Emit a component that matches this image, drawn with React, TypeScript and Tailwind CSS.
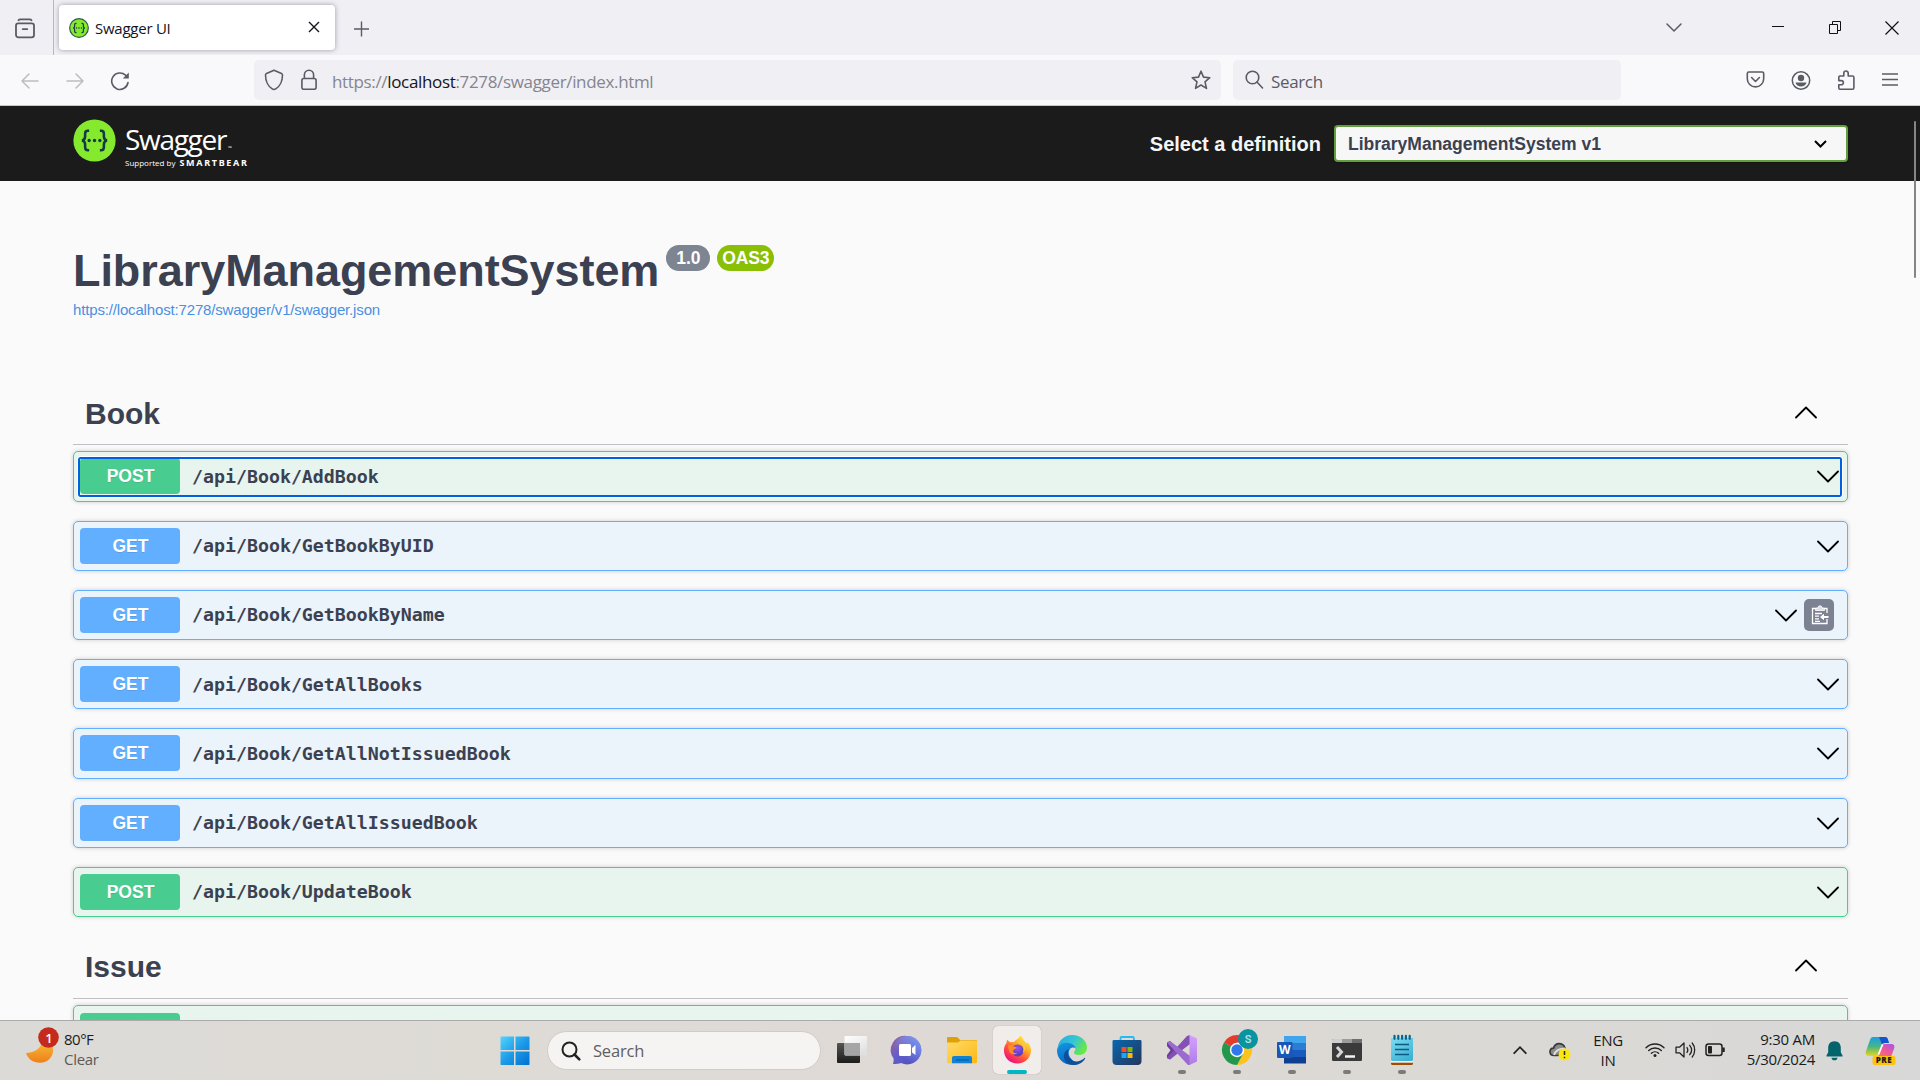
import React from "react";

type Method = "POST" | "GET";
type Endpoint = { method: Method; path: string; focused?: boolean; copy?: boolean };

const endpoints: Endpoint[] = [
  { method: "POST", path: "/api/Book/AddBook", focused: true },
  { method: "GET", path: "/api/Book/GetBookByUID" },
  { method: "GET", path: "/api/Book/GetBookByName", copy: true },
  { method: "GET", path: "/api/Book/GetAllBooks" },
  { method: "GET", path: "/api/Book/GetAllNotIssuedBook" },
  { method: "GET", path: "/api/Book/GetAllIssuedBook" },
  { method: "POST", path: "/api/Book/UpdateBook" },
];

function SwaggerMark({ size, ring = false }: { size: number; ring?: boolean }) {
  return (
    <svg width={size} height={size} viewBox="0 0 44 44" className="shrink-0">
      <circle cx="22" cy="22" r={ring ? 20.5 : 21.6} fill="#85ea2d" stroke={ring ? "#2b5a4a" : "none"} strokeWidth="2.6" />
      <g fill="none" stroke="#173647" strokeWidth="2.6">
        <path d="M16.5 12h-1.3c-2 0-2.8 1-2.8 3v3c0 2.3-.9 3.6-3.2 4 2.3.4 3.2 1.700 3.200 4v3c0 2 .8 3 2.800 3h1.300" />
        <path d="M27.500 12h1.300c2 0 2.800 1 2.800 3v3c0 2.300.9 3.600 3.200 4-2.300.4-3.200 1.700-3.200 4v3c0 2-.8 3-2.800 3h-1.300" />
      </g>
      <g fill="#173647">
        <circle cx="16.500" cy="22" r="1.700" />
        <circle cx="22" cy="22" r="1.700" />
        <circle cx="27.500" cy="22" r="1.700" />
      </g>
    </svg>
  );
}

function TabStrip() {
  return (
    <div className="flex h-[55px] bg-[#f0eff4]">
      <div className="flex w-[54px] border-r border-[#b9b8c0] pl-[15px] pt-[18px]">
        <svg width="20" height="21" viewBox="0 0 20 21" fill="none" stroke="#5b5b66" strokeWidth="1.800" strokeLinecap="round">
          <path d="M3.500 2.300C4 1.500 4.500 1.300 5.200 1.300h9.600c.7 0 1.200.2 1.700 1" />
          <rect x="1" y="5.300" width="18" height="14" rx="2.300" />
          <path d="M7.800 11.200h4.400" />
        </svg>
      </div>
      <div className="ml-[5px] mt-[5px] flex h-[45px] w-[276px] items-center rounded bg-white shadow-[0_0_5px_rgba(100,100,110,0.6)]">
        <div className="ml-[10px]"><SwaggerMark size={20} ring /></div>
        <span className="ml-[6px] mt-[1px] text-[15px] tracking-[-0.25px] text-[#15141a]">Swagger UI</span>
        <svg width="12" height="12" viewBox="0 0 12 12" className="ml-auto mr-[15px] -mt-px" fill="none" stroke="#15141a" strokeWidth="1.400">
          <path d="M1 1l10 10M11 1L1 11" />
        </svg>
      </div>
      <svg width="16" height="16" viewBox="0 0 16 16" className="ml-[18px] mt-[21px]" fill="none" stroke="#5b5b66" strokeWidth="1.400">
        <path d="M8.500 .5v15M1 8h15" />
      </svg>
      <div className="ml-auto flex">
        <svg width="18" height="12" viewBox="0 0 18 12" className="mt-[22px]" fill="none" stroke="#5b5b66" strokeWidth="1.500" strokeLinecap="round">
          <path d="M2 2l7 7 7-7" />
        </svg>
        <svg width="12" height="13" viewBox="0 0 12 13" className="ml-[89px] mt-[20px]" stroke="#111" strokeWidth="1"><path d="M0 6.500h12" /></svg>
        <svg width="13" height="13" viewBox="0 0 13 13" className="ml-[45px] mt-[21px]" fill="none" stroke="#111">
          <path d="M.5 3.500h8v9h-8zM3.500 3.500v-3h8v9h-3" />
        </svg>
        <svg width="14" height="14" viewBox="0 0 14 14" className="ml-[43px] mr-[21px] mt-[21px]" stroke="#111" strokeWidth="1.200"><path d="M.5.500l13 13M13.500.500l-13 13" /></svg>
      </div>
    </div>
  );
}

function NavBar() {
  return (
    <div className="flex h-[51px] border-b border-[#c8c8cc] bg-[#f9f9fb] pt-[5px]">
      <svg width="18" height="16" viewBox="0 0 18 16" className="ml-[21px] mt-[13px]" fill="none" stroke="#bcbcc2" strokeWidth="1.500" strokeLinecap="round" strokeLinejoin="round"><path d="M17 8H1M8 1L1 8l7 7" /></svg>
      <svg width="18" height="16" viewBox="0 0 18 16" className="ml-[27px] mt-[13px]" fill="none" stroke="#bcbcc2" strokeWidth="1.500" strokeLinecap="round" strokeLinejoin="round"><path d="M1 8h16M10 1l7 7-7 7" /></svg>
      <svg width="20" height="20" viewBox="0 0 20 20" className="ml-[26px] mt-[11px]" fill="none" stroke="#5b5b66" strokeWidth="1.600" strokeLinecap="round">
        <path d="M18 11.500a8.200 8.200 0 1 1-2.500-7.300" />
        <path d="M18.800 1.500v6h-6z" fill="#5b5b66" stroke="none" />
      </svg>
      <div className="ml-[124px] flex h-10 w-[967px] rounded-[5px] bg-[#f0eff4]">
        <svg width="20" height="22" viewBox="0 0 20 22" className="ml-[10px] mt-[9px]" fill="none" stroke="#5b5b66" strokeWidth="1.600" strokeLinejoin="round">
          <path d="M10 1.200l7.500 3.200c.7.300 1 .8 1 1.500 0 6.300-3 11.800-6.700 14-.6.400-1.200.6-1.800.6s-1.200-.2-1.800-.6C4.500 17.700 1.500 12.200 1.500 5.900c0-.7.300-1.200 1-1.500z" />
        </svg>
        <svg width="16" height="22" viewBox="0 0 16 22" className="ml-[17px] mt-[9px]" fill="none" stroke="#5b5b66" strokeWidth="1.600">
          <rect x=".9" y="9.500" width="14.200" height="10.700" rx="2" />
          <path d="M3.400 9.500V5.800a4.600 4.600 0 0 1 9.200 0v3.700" />
        </svg>
        <span className="ml-[15px] mt-[10px] text-[17px] leading-6 tracking-[-0.340px] text-[#85858d]">https://<span className="text-[#15141a]">localhost</span>:7278/swagger/index.html</span>
        <svg width="20" height="20" viewBox="0 0 20 20" className="ml-auto mr-[10px] mt-[10px]" fill="none" stroke="#5b5b66" strokeWidth="1.600" strokeLinejoin="round">
          <path d="M10 1.200l2.500 5.900 6.300.6-4.800 4.200 1.500 6.500-5.500-3.400-5.500 3.400L6 11.900 1.200 7.700l6.300-.6z" />
        </svg>
      </div>
      <div className="ml-3 flex h-10 w-[388px] rounded-[5px] bg-[#f0eff4]">
        <svg width="19" height="20" viewBox="0 0 19 20" className="ml-[12px] mt-[10px]" fill="none" stroke="#5b5b66" strokeWidth="1.600" strokeLinecap="round"><circle cx="7.500" cy="7.500" r="6.300" /><path d="M12 12l5.500 6" /></svg>
        <span className="ml-[7px] mt-[10px] text-[17px] leading-6 tracking-[-0.350px] text-[#5b5b66]">Search</span>
      </div>
      <div className="ml-auto mr-[22px] flex pt-[10px]">
        <svg width="19" height="20" viewBox="0 0 19 20" fill="none" stroke="#5b5b66" strokeWidth="1.600" strokeLinecap="round" strokeLinejoin="round"><path d="M2.800 2h13.400c.9 0 1.500.6 1.500 1.500v5.200a8.200 8.200 0 0 1-16.400 0V3.500c0-.9.600-1.500 1.500-1.500zM5.600 7.500l3.900 4 3.900-4" /></svg>
        <svg width="20" height="20" viewBox="0 0 20 20" className="ml-[26px]" fill="#5b5b66"><circle cx="10" cy="10.500" r="8.700" fill="none" stroke="#5b5b66" strokeWidth="1.500" /><circle cx="10" cy="8" r="3.200" /><path d="M4.500 12.500h11c-.6 2.400-3 4-5.500 4s-4.900-1.600-5.500-4z" /></svg>
        <svg width="19" height="21" viewBox="0 0 19 21" className="ml-[26px]" fill="none" stroke="#5b5b66" strokeWidth="1.600" strokeLinejoin="round"><path d="M3 19.200c-.8 0-1.200-.4-1.200-1.200v-3.200h2.500a1.900 1.900 0 0 0 0-4.200H1.800V7.200c0-.8.400-1.200 1.200-1.200h3.800V3.200a2.100 2.100 0 0 1 4.400 0V6h4.300c.9 0 1.400.5 1.400 1.400v10.400c0 .9-.5 1.400-1.400 1.400z" /></svg>
        <svg width="16" height="20" viewBox="0 0 16 20" className="ml-[26px]" stroke="#5b5b66" strokeWidth="1.500"><path d="M0 4h16M0 9.500h16M0 15h16" /></svg>
      </div>
    </div>
  );
}

function Chevron({ up = false, className = "" }: { up?: boolean; className?: string }) {
  return (
    <svg width="22" height="13" viewBox="0 0 22 13" className={"shrink-0 " + className} fill="none" stroke="#000" strokeWidth="1.800" strokeLinecap="round" strokeLinejoin="round">
      <path d={up ? "M1 11.500L11 1.500l10 10" : "M1 1.500l10 10 10-10"} />
    </svg>
  );
}

function SwaggerHeader() {
  return (
    <div className="flex h-[75px] bg-[#1b1b1b] pl-[73px] pr-[72px] font-['Liberation_Sans']">
      <div className="mt-[13px]"><SwaggerMark size={43} /></div>
      <div className="ml-[9px] mt-[18px] font-['Open_Sans'] text-white">
        <div className="flex h-[31px] items-end text-[28px] leading-[31px] tracking-[-1.300px]">
          Swagger<span className="ml-[2px] pb-[4px] text-[5px] leading-none tracking-normal">™</span>
        </div>
        <div className="flex items-baseline whitespace-nowrap pt-[3px] text-[8px] leading-[10px]">
          Supported by<span className="ml-[4px] font-['Noto_Sans'] text-[9px] font-bold tracking-[1.700px]">SMARTBEAR</span>
        </div>
      </div>
      <div className="ml-auto flex pt-[19px]">
        <span className="mr-[13px] text-[20px] font-bold leading-[38px] text-[#f5f5f5]">Select a definition</span>
        <div className="flex h-[37px] w-[514px] items-center justify-between rounded border-2 border-[#62a03f] bg-[#f7f7f7] pl-[12px] pr-[19px] text-[17.500px] font-bold text-[#3b4151] shadow-[0_1px_2px_rgba(0,0,0,0.25)]">
          <span className="mt-px">LibraryManagementSystem v1</span>
          <svg width="13" height="8" viewBox="0 0 13 8" fill="none" stroke="#000" strokeWidth="2"><path d="M1 1l5.500 5.500L12 1" /></svg>
        </div>
      </div>
    </div>
  );
}

function TagHeader({ name }: { name: string }) {
  return (
    <div className="flex h-[62px] items-center justify-between border-b border-[#bfc0c5] pl-[12px] pr-[31px]">
      <h2 className="text-[30px] font-bold leading-none">{name}</h2>
      <Chevron up className="-mt-[3px]" />
    </div>
  );
}

function OperationRow({ op }: { op: Endpoint }) {
  const post = op.method === "POST";
  return (
    <div
      className={
        "relative mb-[19px] flex items-center rounded-[5px] border pl-[6px] pr-[8px] shadow-[0_0_4px_rgba(0,0,0,0.19)] " +
        (post ? "border-[#49cc90] bg-[#e7f5ee] " : "border-[#61affe] bg-[#ebf3fb] ") +
        (op.focused ? "h-[50.800px]" : "h-[50.200px]")
      }
    >
      <span
        className={
          "w-[100px] rounded pl-px text-center text-[17.500px] font-bold leading-9 text-white [text-shadow:0_1px_0_rgba(0,0,0,0.1)] " +
          (post ? "bg-[#49cc90]" : "bg-[#61affe]")
        }
      >
        {op.method}
      </span>
      <span className="ml-[12px] mt-px font-['DejaVu_Sans_Mono'] text-[18.250px] font-bold leading-none text-[#3b4151]">{op.path}</span>
      <Chevron className={op.copy ? "ml-auto mr-[7px] mt-px" : "ml-auto mt-px"} />
      {op.copy && (
        <span className="mr-[5px] flex h-8 w-[30px] items-center justify-center rounded-[5px] bg-[#7d8293]">
          <svg width="18" height="20" viewBox="0 0 18 20" className="ml-[2px]" fill="none" stroke="#fff" strokeWidth="1.300">
            <path d="M16 8V3.500H1.500v15H16V14" />
            <path d="M4.500 3.200h2.300C6.800 0 11.200 0 11.200 3.200h2.300v2.300h-9z" fill="#dfe0e5" strokeWidth=".8" />
            <path d="M4 8.500h7M4 11.200h4M4 13.900h4M4 16.300h5" />
            <path d="M9 12l4-3.300v2.200h4.500v2.200H13v2.200z" fill="#fff" stroke="none" />
          </svg>
        </span>
      )}
      {op.focused && (
        <div className="pointer-events-none absolute bottom-[4px] left-[4px] right-[5px] top-[5px] rounded-[2px] border-2 border-[#0060df] outline outline-1 outline-white" />
      )}
    </div>
  );
}

function ApiPage() {
  return (
    <main className="relative h-[839px] overflow-hidden bg-[#fafafa] px-[73px] pr-[72px] font-['Liberation_Sans'] text-[#3b4151]">
      <div className="flex pt-[64px]">
        <h1 className="mt-[3px] text-[45px] font-bold leading-[46px] tracking-[-0.060px]">LibraryManagementSystem</h1>
        <span className="ml-[7px] h-[26px] w-[44px] rounded-full bg-[#7d8492] text-center text-[17.500px] font-bold leading-[26px] text-white">1.0</span>
        <span className="ml-[7px] h-[26px] w-[57px] rounded-full bg-[#89bf04] text-center text-[17.500px] font-bold leading-[26px] tracking-[-0.1px] text-white">OAS3</span>
      </div>
      <a className="mt-[6px] block text-[15px] leading-5 tracking-[-0.160px] text-[#4990e2]">https://localhost:7278/swagger/v1/swagger.json</a>
      <div className="mt-[63px]"><TagHeader name="Book" /></div>
      <div className="pb-px pt-[6px]">
        {endpoints.map((op) => <OperationRow key={op.path} op={op} />)}
      </div>
      <TagHeader name="Issue" />
      <div className="mt-[6px] h-[50px] rounded-[5px] border border-[#49cc90] bg-[#e7f5ee] pl-[6px] pt-[7px] shadow-[0_0_4px_rgba(0,0,0,0.190)]">
        <div className="h-9 w-[100px] rounded bg-[#49cc90]" />
      </div>
    </main>
  );
}

function Win() {
  return (
    <svg width="30" height="30" viewBox="0 0 30 30">
      <defs><linearGradient id="win" x1="0" y1="0" x2="1" y2="1"><stop stopColor="#50d5ff" /><stop offset=".5" stopColor="#1e9be8" /><stop offset="1" stopColor="#0070d0" /></linearGradient></defs>
      <path fill="url(#win)" d="M1 .5h13v13.500H.5V1zM15.500.5H29l.5.5v13H15.500zM.5 15.500H14V29H1l-.5-.5zM15.500 15.500h14v13l-.5.5H15.500z" />
    </svg>
  );
}

const appIcons: { id: string; dot?: boolean; active?: boolean; art: React.ReactNode }[] = [
  {
    id: "taskview",
    art: (
      <>
        <defs>
          <linearGradient id="tv1" x2="0" y2="1"><stop stopColor="#555" /><stop offset="1" stopColor="#1c1c1a" /></linearGradient>
          <linearGradient id="tv2" x2=".6" y2="1"><stop stopColor="#fff" /><stop offset="1" stopColor="#e0e0e0" /></linearGradient>
        </defs>
        <rect x="0" y="8" width="23" height="20" rx="1" fill="url(#tv1)" />
        <rect x="7.500" y="1" width="22.500" height="19.500" rx="1" fill="url(#tv2)" />
        <path d="M7.500 8H23v12.500H8.500l-1-1z" fill="#a5a5a5" />
      </>
    ),
  },
  {
    id: "chat",
    art: (
      <>
        <defs><linearGradient id="ch" x1=".1" y1=".2" x2=".8" y2=".9"><stop stopColor="#8b62a8" /><stop offset=".5" stopColor="#5f5ccb" /><stop offset="1" stopColor="#5350bf" /></linearGradient>
        <linearGradient id="ch2" x1="1" y1="0" x2=".3" y2=".7"><stop stopColor="#7fa0f5" /><stop offset="1" stopColor="#7fa0f5" stopOpacity="0" /></linearGradient></defs>
        <path d="M15 1a14.200 14.200 0 1 1-6 27c-2 .8-4.500 1-8 1 .6-2 .8-4 .6-5.500A14.200 14.200 0 0 1 15 1z" fill="url(#ch)" />
        <circle cx="15.200" cy="15.200" r="14.200" fill="url(#ch2)" />
        <rect x="7" y="9" width="12" height="12" rx="1.500" fill="#fff" />
        <path d="M20 13l3.500-3v10L20 17.500z" fill="#fff" />
      </>
    ),
  },
  {
    id: "files",
    art: (
      <>
        <defs><linearGradient id="fo" x2="1" y2="1"><stop stopColor="#ffdc6b" /><stop offset="1" stopColor="#fdb813" /></linearGradient></defs>
        <path d="M0 3.200C0 2.500.5 2 1.200 2h9l3 3H29c.6 0 1 .4 1 1v8H0z" fill="#e0a106" />
        <path d="M0 7.500h11L13.500 5.500H29c.6 0 1 .4 1 1V27c0 .7-.4 1.200-1 1.200H1c-.6 0-1-.5-1-1.200z" fill="url(#fo)" />
        <path d="M5 28.200V23c0-1.200.8-2 2-2h16c1.200 0 2 .8 2 2v5.200z" fill="#1283d4" />
        <path d="M9 25h13" stroke="#075ba4" strokeWidth="1.200" />
      </>
    ),
  },
  {
    id: "firefox",
    active: true,
    art: (
      <>
        <defs>
          <linearGradient id="ff" x1=".9" y1=".1" x2=".3" y2=".95"><stop stopColor="#fff04d" /><stop offset=".35" stopColor="#ffb02a" /><stop offset=".65" stopColor="#ff5a36" /><stop offset="1" stopColor="#f3147d" /></linearGradient>
          <radialGradient id="ffp" cx=".5" cy=".3"><stop stopColor="#a556e8" /><stop offset="1" stopColor="#5b3fc6" /></radialGradient>
        </defs>
        <path d="M18 0c1.500 1 2.800 3 3.200 5 1.500 1 2.300 2 2.800 3.500.5-.6.700-1.300.8-2C28 9.500 29.300 13 29 16c-.5 7.500-6.500 13-14 13S1 23.500 1 15.500c0-3 .8-5.500 2.500-7.500l.7-3.500L7.500 7c1-.5 2.500-.5 3.500 0C13 4.500 16 3.500 18 0z" fill="url(#ff)" />
        <circle cx="15" cy="15.500" r="6.300" fill="url(#ffp)" />
        <path d="M5 10.500c3-1 5-.5 6 1l3 .7c0 1.500-3 2-3.500 3.500 0 2 2 3 4.500 2.200-3 3.500-8.500 1.500-9-3z" fill="#ff8a25" />
        <path d="M13 7.500c3.500-1 7 1 8 3.700 1 3 0 5-1 6.500 2-1 3.500-3.500 3-7L20 5z" fill="#ffcb35" />
      </>
    ),
  },
  {
    id: "edge",
    art: (
      <>
        <defs>
          <linearGradient id="e1" x2="1" y2=".5"><stop stopColor="#25a7e6" /><stop offset=".55" stopColor="#35c5d5" /><stop offset="1" stopColor="#66e84b" /></linearGradient>
          <linearGradient id="e2" x2=".3" y2="1"><stop stopColor="#1496e0" /><stop offset="1" stopColor="#0a69c4" /></linearGradient>
        </defs>
        <path d="M.5 13C1.500 5.500 7.500 0 15 0c9 0 15 6 15 12.500 0 5-4 7.500-8 7.500-3.500 0-5-1.300-5-2.500 0-1 1.500-1.500 1.500-4C18.500 10 14 7.500 9.500 8 5 8.500 2 10.500.5 13z" fill="url(#e1)" />
        <path d="M0 15.500C.3 11 5 7.500 10 7.800c5 .2 8.500 2.700 8.500 5.700-1-1-3-1.500-4.500-.5-3 2-3 7 0 10.500 2 2.500 4 4 7 4.800C11 33 0 26 0 15.500z" fill="url(#e2)" />
        <path d="M12.500 14c-2 2-2.500 6 .5 9.500 4 4.500 10 3.500 14.500-.5.500-.4 1 0 .7.600C25 29 19.500 30.500 15 30 8 29 5 22 8 17c1-1.600 3-2.600 4.500-3z" fill="#0f4f99" />
      </>
    ),
  },
  {
    id: "store",
    art: (
      <>
        <defs><linearGradient id="st" x2="1" y2="1"><stop stopColor="#0868b0" /><stop offset="1" stopColor="#25355c" /></linearGradient></defs>
        <path d="M8.500 7V3.200c0-.8.400-1.200 1.200-1.200h11c.8 0 1.200.4 1.200 1.200V7" fill="none" stroke="#28b8f4" strokeWidth="1.800" />
        <path d="M.5 6.500c0-1 .5-1.500 1.500-1.500h26c1 0 1.500.5 1.500 1.500V26c0 2.500-1.500 4-4 4h-21C2 30 .5 28.500.5 26z" fill="url(#st)" />
        <path fill="#f25022" d="M9.500 12h5v5h-5z" /><path fill="#7fba00" d="M15.500 12h5v5h-5z" /><path fill="#1ba8f0" d="M9.500 18h5v5h-5z" /><path fill="#ffb901" d="M15.500 18h5v5h-5z" />
      </>
    ),
  },
  {
    id: "vs",
    dot: true,
    art: (
      <>
        <defs><linearGradient id="vs" x2="0" y2="1"><stop stopColor="#d3a2ff" /><stop offset="1" stopColor="#b17be8" /></linearGradient></defs>
        <path d="M0 7.500L3 6l8.500 9.500L3 24.500l-3-1.500z" fill="#6b3e9e" />
        <path d="M3.500 15.200L0 11v9z" fill="#ddd9da" />
        <path d="M0 23L20 1l3-1v9L3 24.500z" fill="#8351b4" />
        <path d="M3 6l20 15v9h-2L0 7.500z" fill="#9b6bd0" />
        <path d="M22.500 0L30 3.500v23L22.500 30z" fill="url(#vs)" />
      </>
    ),
  },
  {
    id: "chrome",
    dot: true,
    art: (
      <>
        <path d="M15 15L2 7.500A15 15 0 0 1 28 7.500H15z" fill="#e33b2e" />
        <path d="M15 15L28 7.500A15 15 0 0 1 15 30l6-11z" fill="#fcc31e" />
        <path d="M15 15l6 4-6 11A15 15 0 0 1 2 7.500z" fill="#24984a" />
        <circle cx="15" cy="15" r="7.200" fill="#fff" /><circle cx="15" cy="15" r="5.700" fill="#2f78ee" />
        <circle cx="26" cy="4" r="10" fill="#0a93a0" />
        <text x="26" y="8" textAnchor="middle" fontSize="11" fontWeight="600" fontFamily="Roboto" fill="#a9e3e5">S</text>
      </>
    ),
  },
  {
    id: "word",
    dot: true,
    art: (
      <>
        <path d="M7 1h22v7H7z" fill="#41a5ee" /><path d="M7 8h22v7H7z" fill="#2b7cd3" /><path d="M7 15h22v7H7z" fill="#185abd" /><path d="M7 22h22v6.500H7z" fill="#103f91" />
        <rect x="0" y="7" width="15.500" height="16" rx="1" fill="#1757b5" />
        <text x="7.700" y="19.300" textAnchor="middle" fontSize="12" fontWeight="700" fontFamily="Open Sans" fill="#fff">W</text>
      </>
    ),
  },
  {
    id: "terminal",
    dot: true,
    art: (
      <>
        <rect x="0" y="4" width="30" height="22" rx="1.200" fill="#3a3a3a" />
        <path d="M0 8V5.200C0 4.500.5 4 1.200 4H10v4z" fill="#cfcfcf" /><path d="M10 4h10v4H10z" fill="#9c9c9c" /><path d="M20 4h8.800c.7 0 1.200.5 1.200 1.200V8H20z" fill="#6e6e6e" />
        <path d="M5 12l4.500 5L5 22" fill="none" stroke="#d6d6d6" strokeWidth="3" /><path d="M13 21.500h10" stroke="#f2f2f2" strokeWidth="2.500" />
      </>
    ),
  },
  {
    id: "notepad",
    dot: true,
    art: (
      <>
        <defs><linearGradient id="np" x2=".6" y2="1"><stop stopColor="#7edcf2" /><stop offset="1" stopColor="#3fb3d6" /></linearGradient></defs>
        <path d="M4 27.500h22v1.300c0 .7-.5 1.200-1.200 1.200H5.200C4.500 30 4 29.500 4 28.800z" fill="#a24b06" /><path d="M4 25.500h22v2H4z" fill="#f3f3f3" />
        <path d="M4 3h22v21.500c0 .8-.5 1.500-1.300 1.500H5.300C4.500 26 4 25.300 4 24.500z" fill="url(#np)" />
        <path d="M8 9.500h14M8 14.500h14M8 19.500h14" stroke="#0c5a80" strokeWidth="1.700" />
        <path d="M7.500.8v3M11.300.8v3M15.100.8v3M18.900.8v3M22.700.8v3" stroke="#0c6488" strokeWidth="2.200" strokeLinecap="round" />
      </>
    ),
  },
];

function Taskbar() {
  return (
    <footer className="flex h-[60px] border-t border-[#ababab] bg-[linear-gradient(90deg,#dcdad7_0%,#dedbd5_25%,#dfd9d5_50%,#dbd9d4_75%,#d8d8d8_100%)] text-[#1b1b1b]">
      <div className="flex w-[500px]">
        <svg width="36" height="40" viewBox="0 0 36 40" className="ml-[25px] mt-[5px]">
          <defs><linearGradient id="moon" x2="0" y2="1"><stop stopColor="#f5c53b" /><stop offset="1" stopColor="#f07e1a" /></linearGradient></defs>
          <path d="M1 27c2.500 0 5-.4 8-1.700 6-2.700 8.500-7 8.500-12.300 6 1 11.500 6 10.500 13-1 6-6 10.800-13 10.800C8 36.800 3 33 1 27z" fill="url(#moon)" />
          <circle cx="23.500" cy="11.500" r="10.300" fill="#c42b1c" />
          <text x="24" y="16.500" textAnchor="middle" fontSize="13" fontWeight="600" fontFamily="Open Sans" fill="#fff">1</text>
        </svg>
        <div className="ml-[3px] mt-[8px] text-[15px] leading-5 tracking-[-0.500px]">
          <div>80°F</div>
          <div className="tracking-[-0.300px] text-[#5b5a58]">Clear</div>
        </div>
      </div>
      <div className="mt-[14.500px]"><Win /></div>
      <div className="ml-[17px] mt-[10px] flex h-[39px] w-[274px] rounded-full border border-[#cfccc9] bg-[#f5f4f2]">
        <svg width="20" height="20" viewBox="0 0 20 20" className="ml-[13px] mt-[9px]" fill="none" stroke="#222" strokeWidth="2" strokeLinecap="round"><circle cx="8.500" cy="8.500" r="7" /><path d="M13.500 13.500l4.800 4.800" strokeWidth="2.600" /></svg>
        <span className="ml-[12px] mt-[7px] text-[16.500px] leading-6 tracking-[-0.200px] text-[#605f5d]">Search</span>
      </div>
      <div className="ml-[3.500px] flex pt-[5px]">
        {appIcons.map((a) => (
          <div key={a.id} className="flex w-[55px] justify-center">
            <div className={"flex h-12 w-12 flex-col items-center rounded-[5px] pt-[9px] " + (a.active ? "bg-[#f1edeb] shadow-[0_0_1px_rgba(0,0,0,0.35)]" : "")}>
              <svg width={a.active ? 29 : 30} height="30" viewBox="0 0 30 30" className="overflow-visible">{a.art}</svg>
              {a.active && <div className="mt-[5px] h-1 w-5 rounded-full bg-[#00b7c3]" />}
              {a.dot && <div className="mt-[5px] h-1 w-2 rounded-full bg-[#7d7b79]" />}
            </div>
          </div>
        ))}
      </div>
      <div className="ml-auto flex">
        <svg width="14" height="10" viewBox="0 0 14 10" className="mt-[24px]" fill="none" stroke="#222" strokeWidth="1.800" strokeLinecap="round"><path d="M1.200 8.200L7 2.200l5.800 6" /></svg>
        <svg width="22" height="20" viewBox="0 0 22 20" className="ml-[22px] mt-[20px]">
          <path d="M5.200 14.500C2.300 14.500 1 12.800 1 10.800c0-2.300 1.600-3.600 3.500-3.700C5.500 4.200 7.500 2.700 10 2.700c2.700 0 5 1.500 5.800 4L9 14.500z" fill="#8b8b8b" stroke="#3a3a3a" strokeWidth="1.700" />
          <path d="M5 14c1-3 4-6.500 11-6.500" stroke="#ddd" strokeWidth="2" fill="none" />
          <circle cx="15.500" cy="13.500" r="6" fill="#fbe70c" /><path d="M15.500 10v4M15.500 15.700v1.500" stroke="#222" strokeWidth="1.500" />
        </svg>
        <div className="ml-[20px] mt-[9px] w-[34px] text-center text-[15px] leading-5 tracking-[-0.300px]"><div>ENG</div><div>IN</div></div>
        <svg width="20" height="16" viewBox="0 0 20 16" className="ml-[20px] mt-[21px]" fill="none" stroke="#222" strokeWidth="1.400" strokeLinecap="round"><path d="M1 5.700a12.800 12.800 0 0 1 18 0M3.700 8.600a9 9 0 0 1 12.600 0M6.400 11.300a5.200 5.200 0 0 1 7.200 0" /><circle cx="10" cy="13.500" r="1.500" fill="#222" stroke="none" /></svg>
        <svg width="21" height="18" viewBox="0 0 21 18" className="ml-[10px] mt-[20px]" fill="none" stroke="#222" strokeWidth="1.300" strokeLinejoin="round" strokeLinecap="round"><path d="M1 6.200h3.500L9 2v14l-4.500-4.200H1zM12 6.500c1 1.500 1 3.500 0 5M14.700 4.300c2.300 2.800 2.300 6.600 0 9.400M17.200 2c3.300 4 3.300 10 0 14" /></svg>
        <svg width="21" height="14" viewBox="0 0 21 14" className="ml-[9px] mt-[22px]" fill="none" stroke="#222" strokeWidth="1.500"><rect x="1" y="1" width="16" height="11.500" rx="2.500" /><rect x="3" y="3" width="4" height="7.500" rx=".8" fill="#222" stroke="none" /><path d="M18.500 4.500v4.500" strokeWidth="2.500" /></svg>
        <div className="ml-[10px] mt-[8px] w-[79px] text-right text-[15px] leading-5 tracking-[-0.250px]"><div>9:30 AM</div><div className="whitespace-nowrap tracking-[-0.300px]">5/30/2024</div></div>
        <svg width="17" height="20" viewBox="0 0 17 20" className="ml-[11px] mt-[20px]" fill="#03646c"><path d="M8.500.3c4 0 6.300 2.800 6.300 6.500v4.500l1.800 3.400c.2.500 0 .8-.5.800H.9c-.5 0-.7-.3-.5-.8l1.800-3.400V6.800C2.200 3.100 4.500.3 8.500.3zM5.500 16.700h6c0 1.700-1.400 2.600-3 2.600s-3-.9-3-2.600z" /></svg>
        <svg width="31" height="30" viewBox="0 0 31 30" className="ml-[22px] mr-[24px] mt-[15px]">
          <defs>
            <linearGradient id="cp1" x2="0" y2="1"><stop stopColor="#179fe8" /><stop offset=".5" stopColor="#48b582" /><stop offset="1" stopColor="#e8d61e" /></linearGradient>
            <linearGradient id="cp2" x1="1" x2=".2" y2="1"><stop stopColor="#a553e8" /><stop offset=".5" stopColor="#ee5a98" /><stop offset="1" stopColor="#ff7d48" /></linearGradient>
          </defs>
          <path d="M8 1h12c1.500 0 2.300.8 2.800 2.300L24 7h-4c-2 0-3 1-3.600 3l-2.800 7.500c-.6 1.500-1.500 2.500-3.500 2.500H4.500C1.500 20 0 18 1 15L5 4c.7-2 1.500-3 3-3z" fill="url(#cp1)" />
          <path d="M14 1h6c1.500 0 2.300.8 2.800 2.300L24 7h-4c-1.500 0-2.300.5-3 1.500z" fill="#1555cf" />
          <path d="M20 8h6c3 0 4 2 3 4.800L26 21c-.6 1.500-1.500 2-3 2H10c2-.5 3-2 3.600-4l3-8c.6-2 1.600-3 3.400-3z" fill="url(#cp2)" />
          <path d="M17.500 8.500l-4 10" stroke="#fff" strokeWidth="1.800" />
          <rect x="7.500" y="20" width="23" height="9" rx="2" fill="#fcc40b" />
          <text x="19" y="27.300" textAnchor="middle" fontSize="8" fontWeight="800" letterSpacing=".6" fontFamily="Open Sans" fill="#1a1a1a">PRE</text>
        </svg>
      </div>
    </footer>
  );
}

export default function App() {
  return (
    <div className="relative flex h-[1080px] w-[1920px] flex-col overflow-hidden font-['Open_Sans',sans-serif]">
      <TabStrip />
      <NavBar />
      <SwaggerHeader />
      <ApiPage />
      <Taskbar />
      <div className="absolute left-[1914px] top-[121px] h-[157px] w-[2px] rounded-full bg-[#858585]" />
    </div>
  );
}
